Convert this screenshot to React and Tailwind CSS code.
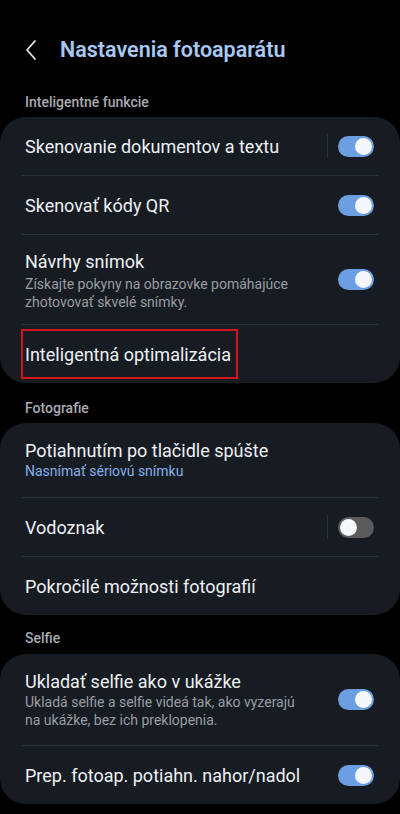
import React from "react";

function Toggle({ on }) {
  return (
    <div
      className={
        on
          ? "w-[36px] h-[21px] rounded-full bg-[#6c9fe2] flex items-center justify-end px-[2px]"
          : "w-[36px] h-[21px] rounded-full bg-[#5b5b5e] flex items-center justify-start px-[2px]"
      }
    >
      <div className="w-[17px] h-[17px] rounded-full bg-[#f5f7fb]" />
    </div>
  );
}

function Divider() {
  return <div className="mx-[22px] h-px bg-[#2b313a]" />;
}

function SectionLabel({ children, className }) {
  return (
    <div className={"px-[25px] h-[20px] flex items-center text-[14px] font-medium text-[#a9abb0] " + className}>
      {children}
    </div>
  );
}

export default function App() {
  return (
    <div
      className="w-[400px] h-[814px] bg-black overflow-hidden text-[#eef0f3]"
      style={{ fontFamily: "Roboto, 'Noto Sans', sans-serif" }}
    >
      {/* header */}
      <div className="pt-[36px] pb-[28px] px-[24px] flex items-center h-[92px]">
        <svg width="16" height="24" viewBox="0 0 16 24" className="mr-[20px]">
          <polyline
            points="11,3 3,12 11,21"
            fill="none"
            stroke="#e8e8e8"
            strokeWidth="1.8"
            strokeLinecap="round"
            strokeLinejoin="round"
          />
        </svg>
        <h1 className="text-[21.5px] font-semibold text-[#a9c8f3]">
          Nastavenia fotoaparátu
        </h1>
      </div>

      <SectionLabel className="mb-[5px]">Inteligentné funkcie</SectionLabel>

      <div className="bg-[#171c23] rounded-[26px]">
        <div className="h-[58px] flex items-center pl-[25px] pr-[26px]">
          <span className="flex-1 text-[18px]">Skenovanie dokumentov a textu</span>
          <div className="w-px h-[24px] bg-[#2b313a] mr-[10px]" />
          <Toggle on />
        </div>
        <Divider />
        <div className="h-[58px] flex items-center pl-[25px] pr-[26px]">
          <span className="flex-1 text-[18px]">Skenovať kódy QR</span>
          <Toggle on />
        </div>
        <Divider />
        <div className="h-[89px] flex items-center pl-[25px] pr-[26px]">
          <div className="flex-1 pt-[2px]">
            <div className="text-[18px] leading-[22px]">Návrhy snímok</div>
            <div className="text-[14px] leading-[18px] text-[#9a9ca1] mt-[2px]">
              Získajte pokyny na obrazovke pomáhajúce
              <br />
              zhotovovať skvelé snímky.
            </div>
          </div>
          <Toggle on />
        </div>
        <Divider />
        <div className="h-[58px] flex items-center pl-[21px] pr-[26px]">
          <div className="h-[50px] w-[217px] border-2 border-[#d3151b] flex items-center pl-[2px]">
            <span className="text-[18px]">Inteligentná optimalizácia</span>
          </div>
        </div>
      </div>

      <SectionLabel className="mt-[15px] mb-[5px]">Fotografie</SectionLabel>

      <div className="bg-[#171c23] rounded-[26px]">
        <div className="h-[74px] flex flex-col justify-center pl-[25px] pr-[26px]">
          <div className="text-[18px] leading-[22px]">Potiahnutím po tlačidle spúšte</div>
          <div className="text-[14px] leading-[18px] text-[#86b0ea]">Nasnímať sériovú snímku</div>
        </div>
        <Divider />
        <div className="h-[58px] flex items-center pl-[25px] pr-[26px]">
          <span className="flex-1 text-[18px]">Vodoznak</span>
          <div className="w-px h-[24px] bg-[#2b313a] mr-[10px]" />
          <Toggle on={false} />
        </div>
        <Divider />
        <div className="h-[58px] flex items-center pl-[25px] pr-[26px]">
          <span className="flex-1 text-[18px]">Pokročilé možnosti fotografií</span>
        </div>
      </div>

      <SectionLabel className="mt-[13px] mb-[6px]">Selfie</SectionLabel>

      <div className="bg-[#171c23] rounded-[26px]">
        <div className="h-[91px] flex items-center pl-[25px] pr-[26px]">
          <div className="flex-1">
            <div className="text-[18px] leading-[22px]">Ukladať selfie ako v ukážke</div>
            <div className="text-[14px] leading-[18px] text-[#9a9ca1]">
              Ukladá selfie a selfie videá tak, ako vyzerajú
              <br />
              na ukážke, bez ich preklopenia.
            </div>
          </div>
          <Toggle on />
        </div>
        <Divider />
        <div className="h-[58px] flex items-center pl-[25px] pr-[26px]">
          <span className="flex-1 text-[18px]">Prep. fotoap. potiahn. nahor/nadol</span>
          <Toggle on />
        </div>
      </div>
    </div>
  );
}
